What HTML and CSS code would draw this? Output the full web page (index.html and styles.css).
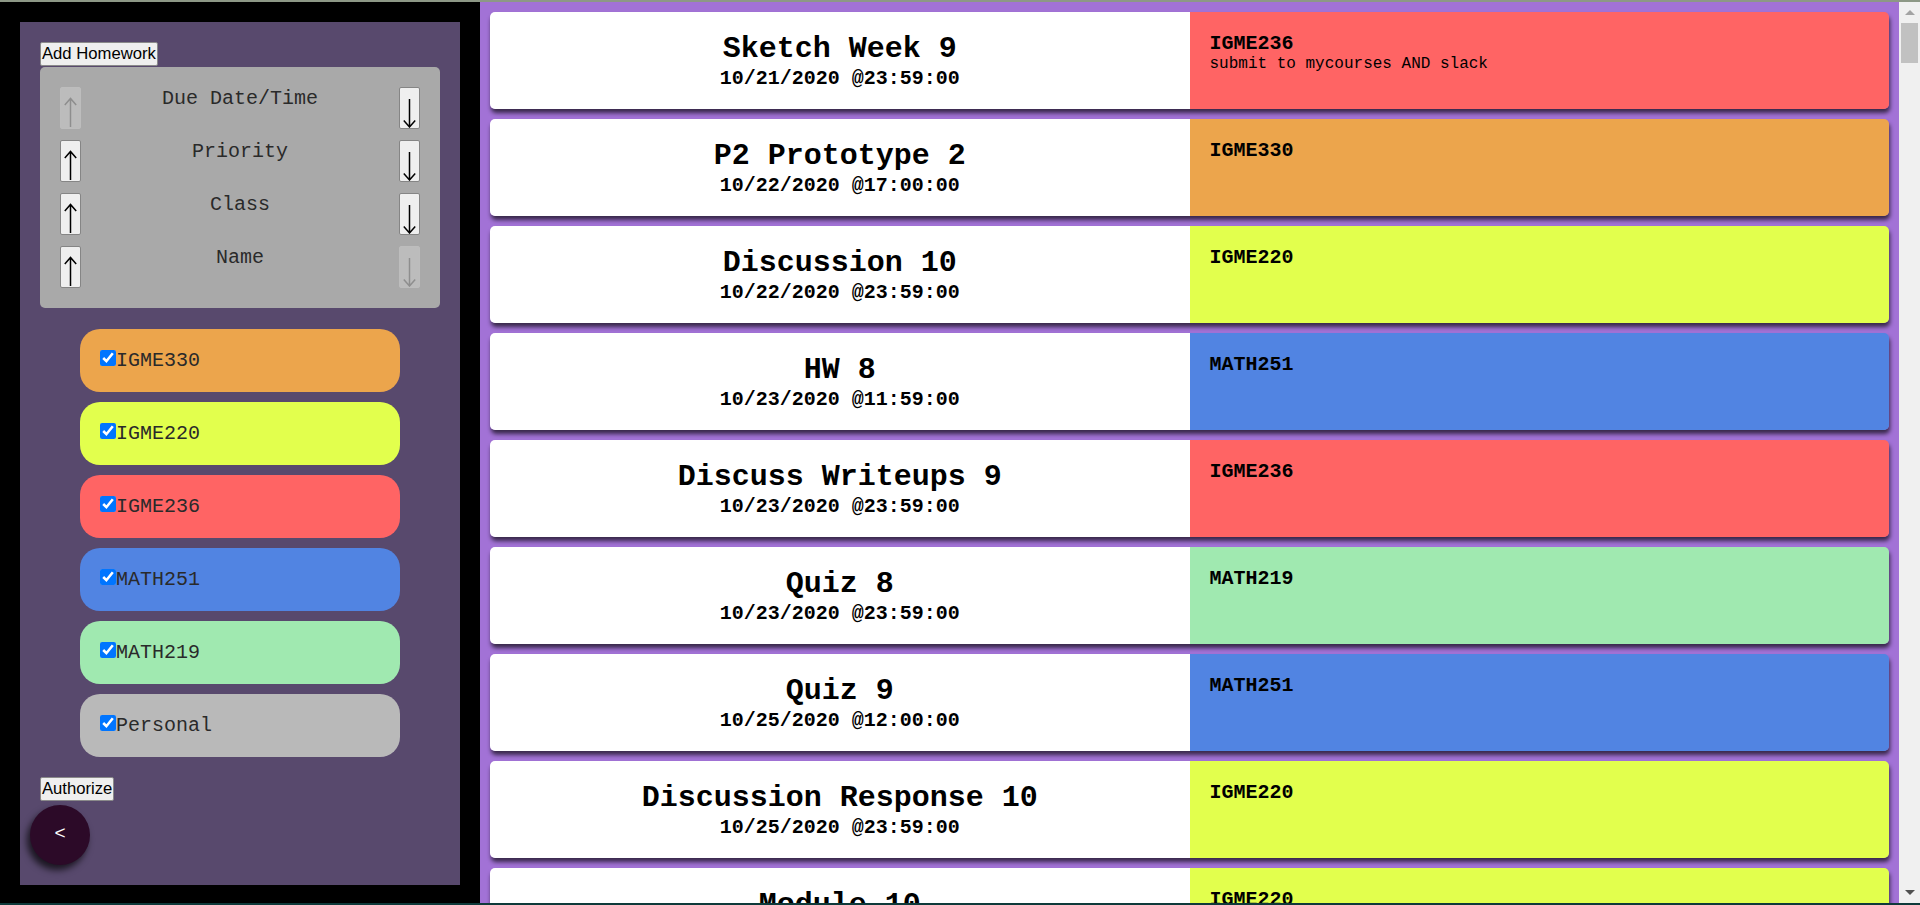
FILE: index.html
```html
<!DOCTYPE html>
<html lang="en">
<head>
<meta charset="utf-8">
<title>Homework Planner</title>
<link rel="stylesheet" href="styles.css">
</head>
<body>
<div class="frame">
  <aside class="sidebar">
    <div class="panel">
      <button class="btn" type="button">Add Homework</button>
      <div class="sorter">
        <div class="sort-row">
          <button class="arrow-btn" type="button" disabled><svg class="arr" viewBox="1 1 19 40"><path d="M10.5 11.5V40M4.8 18l5.7-6.5 5.7 6.5"/></svg></button>
          <span class="sort-label">Due Date/Time</span>
          <button class="arrow-btn" type="button"><svg class="arr" viewBox="1 1 19 40"><path d="M10.5 12V40M4.8 33.5l5.7 6.5 5.7-6.5"/></svg></button>
        </div>
        <div class="sort-row">
          <button class="arrow-btn" type="button"><svg class="arr" viewBox="1 1 19 40"><path d="M10.5 11.5V40M4.8 18l5.7-6.5 5.7 6.5"/></svg></button>
          <span class="sort-label">Priority</span>
          <button class="arrow-btn" type="button"><svg class="arr" viewBox="1 1 19 40"><path d="M10.5 12V40M4.8 33.5l5.7 6.5 5.7-6.5"/></svg></button>
        </div>
        <div class="sort-row">
          <button class="arrow-btn" type="button"><svg class="arr" viewBox="1 1 19 40"><path d="M10.5 11.5V40M4.8 18l5.7-6.5 5.7 6.5"/></svg></button>
          <span class="sort-label">Class</span>
          <button class="arrow-btn" type="button"><svg class="arr" viewBox="1 1 19 40"><path d="M10.5 12V40M4.8 33.5l5.7 6.5 5.7-6.5"/></svg></button>
        </div>
        <div class="sort-row">
          <button class="arrow-btn" type="button"><svg class="arr" viewBox="1 1 19 40"><path d="M10.5 11.5V40M4.8 18l5.7-6.5 5.7 6.5"/></svg></button>
          <span class="sort-label">Name</span>
          <button class="arrow-btn" type="button" disabled><svg class="arr" viewBox="1 1 19 40"><path d="M10.5 12V40M4.8 33.5l5.7 6.5 5.7-6.5"/></svg></button>
        </div>
      </div>
      <div class="filters">
        <label class="pill c-igme330"><input type="checkbox" checked>IGME330</label>
        <label class="pill c-igme220"><input type="checkbox" checked>IGME220</label>
        <label class="pill c-igme236"><input type="checkbox" checked>IGME236</label>
        <label class="pill c-math251"><input type="checkbox" checked>MATH251</label>
        <label class="pill c-math219"><input type="checkbox" checked>MATH219</label>
        <label class="pill c-personal"><input type="checkbox" checked>Personal</label>
      </div>
      <button class="btn auth" type="button">Authorize</button>
      <button class="fab" type="button">&lt;</button>
    </div>
  </aside>
  <main class="main">
    <div class="list">
      <article class="card">
        <div class="card-main"><h2>Sketch Week 9</h2><p class="due">10/21/2020 @23:59:00</p></div>
        <div class="card-info c-igme236"><h3>IGME236</h3><p>submit to mycourses AND slack</p></div>
      </article>
      <article class="card">
        <div class="card-main"><h2>P2 Prototype 2</h2><p class="due">10/22/2020 @17:00:00</p></div>
        <div class="card-info c-igme330"><h3>IGME330</h3></div>
      </article>
      <article class="card">
        <div class="card-main"><h2>Discussion 10</h2><p class="due">10/22/2020 @23:59:00</p></div>
        <div class="card-info c-igme220"><h3>IGME220</h3></div>
      </article>
      <article class="card">
        <div class="card-main"><h2>HW 8</h2><p class="due">10/23/2020 @11:59:00</p></div>
        <div class="card-info c-math251"><h3>MATH251</h3></div>
      </article>
      <article class="card">
        <div class="card-main"><h2>Discuss Writeups 9</h2><p class="due">10/23/2020 @23:59:00</p></div>
        <div class="card-info c-igme236"><h3>IGME236</h3></div>
      </article>
      <article class="card">
        <div class="card-main"><h2>Quiz 8</h2><p class="due">10/23/2020 @23:59:00</p></div>
        <div class="card-info c-math219"><h3>MATH219</h3></div>
      </article>
      <article class="card">
        <div class="card-main"><h2>Quiz 9</h2><p class="due">10/25/2020 @12:00:00</p></div>
        <div class="card-info c-math251"><h3>MATH251</h3></div>
      </article>
      <article class="card">
        <div class="card-main"><h2>Discussion Response 10</h2><p class="due">10/25/2020 @23:59:00</p></div>
        <div class="card-info c-igme220"><h3>IGME220</h3></div>
      </article>
      <article class="card">
        <div class="card-main"><h2>Module 10</h2><p class="due">10/26/2020 @23:59:00</p></div>
        <div class="card-info c-igme220"><h3>IGME220</h3></div>
      </article>
    </div>
    <div class="scrollbar" aria-hidden="true">
      <span class="sb-btn"><span class="tri-up"></span></span>
      <span class="sb-thumb"></span>
      <span class="sb-track"></span>
      <span class="sb-btn"><span class="tri-down"></span></span>
    </div>
  </main>
</div>
</body>
</html>
```

FILE: styles.css
```css
* { box-sizing: border-box; }

html, body {
  margin: 0;
  height: 100%;
  overflow: hidden;
  background: #000;
}

.frame {
  height: 905px;
  display: flex;
  border-top: 2px solid #8d9886;
  border-bottom: 2px solid #0e3a3a;
  font-family: "Liberation Mono", "Courier New", monospace;
}

/* ---------- sidebar ---------- */
.sidebar {
  width: 480px;
  flex: none;
  background: #000;
  padding: 20px 20px 18px 20px;
  display: flex;
}

.panel {
  flex: 1;
  background: #58496d;
  padding: 20px;
  display: flex;
  flex-direction: column;
  align-items: flex-start;
}

.btn {
  font-family: "Liberation Sans", Arial, sans-serif;
  font-size: 16.67px;
  line-height: 20px;
  height: 24px;
  padding: 1px 1px;
  color: #000;
  background: #efefef;
  border: 1px solid #8a8a8a;
  border-radius: 2px;
}

.sorter {
  align-self: stretch;
  margin-top: 1px;
  background: #a9a9a9;
  border-radius: 5px;
  padding: 20px;
  display: flex;
  flex-direction: column;
  gap: 11px;
}

.sort-row {
  display: flex;
  align-items: flex-start;
  height: 42px;
}

.sort-label {
  flex: 1;
  text-align: center;
  font-size: 20px;
  line-height: 22px;
  padding-top: 1px;
  color: #2a2a2a;
}

.arrow-btn {
  width: 21px;
  height: 42px;
  padding: 0;
  background: #efefef;
  border: 1px solid #858585;
  border-radius: 2px;
  display: flex;
}

.arr {
  width: 19px;
  height: 40px;
  fill: none;
  stroke: #000;
  stroke-width: 1.5;
}

.arrow-btn:disabled {
  background: #bcbcbc;
  border-color: #bdbdbd;
}

.arrow-btn:disabled .arr {
  stroke: #8e8e8e;
}

.filters {
  align-self: center;
  width: 320px;
  margin-top: 21px;
  display: flex;
  flex-direction: column;
  gap: 10px;
}

.pill {
  display: block;
  height: 63px;
  border-radius: 20px;
  padding: 20px 20px 0;
  font-size: 20px;
  line-height: 23px;
  color: #2a2a2a;
  white-space: nowrap;
}

.pill input {
  width: 16px;
  height: 16px;
  margin: 0;
  vertical-align: baseline;
}

.auth {
  margin-top: 20px;
}

.fab {
  margin-top: 4px;
  margin-left: -10px;
  width: 60px;
  height: 60px;
  border-radius: 50%;
  border: none;
  background: #2c0a28;
  color: #fff;
  font-family: "Liberation Sans", Arial, sans-serif;
  font-size: 19px;
  padding: 0 0 4px;
  box-shadow: -3px 5px 7px rgba(0, 0, 0, 0.7);
}

/* ---------- course colours ---------- */
.c-igme330 { background: #eca54c; }
.c-igme220 { background: #e2ff4d; }
.c-igme236 { background: #ff6464; }
.c-math251 { background: #5184e2; }
.c-math219 { background: #a0e9b0; }
.c-personal { background: #b9b9b9; }

/* ---------- main list ---------- */
.main {
  flex: 1;
  min-width: 0;
  background: #a272d6;
  display: flex;
  overflow: hidden;
}

.list {
  flex: 1;
  min-width: 0;
  padding: 10px;
  display: flex;
  flex-direction: column;
  gap: 10px;
  overflow: hidden;
}

.card {
  height: 97px;
  flex: none;
  display: grid;
  grid-template-columns: 1fr 1fr;
  border-radius: 5px;
  overflow: hidden;
  box-shadow: 1px 4px 4px rgba(0, 0, 0, 0.65);
}

.card-main {
  background: #fff;
  display: flex;
  flex-direction: column;
  align-items: center;
  justify-content: center;
  color: #000;
}

.card-main h2 {
  margin: 0;
  font-size: 30px;
  font-weight: bold;
  line-height: 36px;
}

.due {
  margin: 0;
  font-size: 20px;
  font-weight: bold;
  line-height: 23px;
}

.card-info {
  padding: 20px;
  color: #000;
}

.card-info h3 {
  margin: 0;
  font-size: 20px;
  font-weight: bold;
  line-height: 23px;
}

.card-info p {
  margin: 0;
  font-size: 16px;
  line-height: 18px;
}

/* ---------- scrollbar ---------- */
.scrollbar {
  width: 21px;
  flex: none;
  background: #f0f0f0;
  display: flex;
  flex-direction: column;
}

.sb-btn {
  height: 21px;
  flex: none;
  display: flex;
  align-items: center;
  justify-content: center;
}

.tri-up {
  width: 0;
  height: 0;
  border-left: 5px solid transparent;
  border-right: 5px solid transparent;
  border-bottom: 5px solid #a3a3a3;
}

.tri-down {
  width: 0;
  height: 0;
  border-left: 5px solid transparent;
  border-right: 5px solid transparent;
  border-top: 5px solid #505050;
}

.sb-thumb {
  height: 40px;
  flex: none;
  margin: 0 2px;
  background: #c1c1c1;
}

.sb-track {
  flex: 1;
}
```
